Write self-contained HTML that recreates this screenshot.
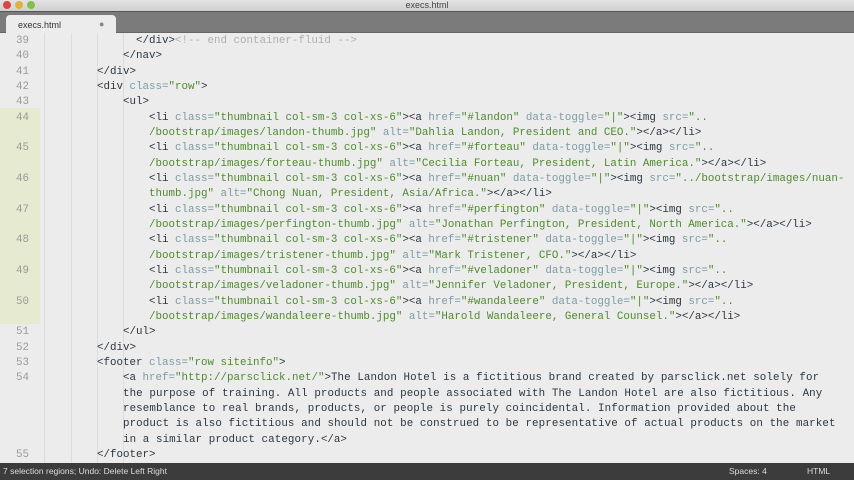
<!DOCTYPE html>
<html><head><meta charset="utf-8"><style>
*{margin:0;padding:0;box-sizing:border-box}
body{width:854px;height:480px;overflow:hidden;background:#ececec;font-family:"Liberation Mono",monospace;position:relative}
#title{position:absolute;left:0;top:0;width:854px;height:11px;background:linear-gradient(#e4e4e4,#cfcfcf);font:9px "Liberation Sans",sans-serif;color:#444;text-align:center;line-height:11px}
.dot{position:absolute;top:1px;width:8px;height:8px;border-radius:50%}
#tabbar{position:absolute;left:0;top:11px;width:854px;height:22px;background:#7b7b7b;border-top:1px solid #555;border-bottom:1px solid #666}
#tab{position:absolute;left:6px;top:3px;width:110px;height:19px;background:#ececec;border-radius:4px 4px 0 0;font:9px "Liberation Sans",sans-serif;color:#333;padding:5px 0 0 12px}
#gut{position:absolute;left:0;top:33px;width:40px;height:430px;background:#ececec}
#hl{position:absolute;left:0;top:108px;width:40px;height:216px;background:#e6ead0}
.g{position:absolute;top:33px;width:1px;height:430px;background:#dcdcdc}
#code{position:absolute;left:45px;top:34px;font-size:10.83px;line-height:15.33px;white-space:pre;color:#2c3640}
.n{position:absolute;left:0;width:29px;text-align:right;font-size:10.83px;line-height:15.33px;color:#9a9a9a;margin-top:2px}
.a{color:#7c9ca4}.s{color:#4f8a2e}.c{color:#b0b0b0}
.f{letter-spacing:0.1px}
#status{position:absolute;left:0;top:463px;width:854px;height:17px;background:#3c3c3c;color:#ddd;font:8.5px "Liberation Sans",sans-serif;line-height:17px}
</style></head><body>
<div id="title"><span class="dot" style="left:3px;background:#e0443e"></span><span class="dot" style="left:15px;background:#e2b03a"></span><span class="dot" style="left:27px;background:#7fc24a"></span>execs.html</div>
<div id="tabbar"><div id="tab">execs.html<span style="position:absolute;left:93px;top:4px;color:#888">●</span></div></div>
<div id="gut"></div><div id="hl"></div>
<div class="g" style="left:44px"></div><div class="g" style="left:71px"></div><div class="g" style="left:97px"></div><div class="g" style="left:123px"></div>
<div class="n" style="top:32px">39</div><div class="n" style="top:47.3px">40</div><div class="n" style="top:62.7px">41</div><div class="n" style="top:78px">42</div><div class="n" style="top:93.3px">43</div><div class="n" style="top:108.7px">44</div><div class="n" style="top:139.3px">45</div><div class="n" style="top:170px">46</div><div class="n" style="top:200.7px">47</div><div class="n" style="top:231.3px">48</div><div class="n" style="top:262px">49</div><div class="n" style="top:292.7px">50</div><div class="n" style="top:323.3px">51</div><div class="n" style="top:338.7px">52</div><div class="n" style="top:354px">53</div><div class="n" style="top:369.3px">54</div><div class="n" style="top:446px">55</div><div class="n" style="top:461px">56</div>
<div id="code">              &lt;/div&gt;<span class="c">&lt;!-- end container-fluid --&gt;</span>
            &lt;/nav&gt;
        &lt;/div&gt;
        &lt;div <span class="a">class=</span><span class="s">"row"</span>&gt;
            &lt;ul&gt;
                &lt;li <span class="a">class=</span><span class="s">"thumbnail col-sm-3 col-xs-6"</span>&gt;&lt;a <span class="a">href=</span><span class="s">"#landon"</span> <span class="a">data-toggle=</span><span class="s">"|"</span>&gt;&lt;img <span class="a">src=</span><span class="s">"..</span>
<span class="s">                /bootstrap/images/landon-thumb.jpg"</span> <span class="a">alt=</span><span class="s">"Dahlia Landon, President and CEO."</span>&gt;&lt;/a&gt;&lt;/li&gt;
                &lt;li <span class="a">class=</span><span class="s">"thumbnail col-sm-3 col-xs-6"</span>&gt;&lt;a <span class="a">href=</span><span class="s">"#forteau"</span> <span class="a">data-toggle=</span><span class="s">"|"</span>&gt;&lt;img <span class="a">src=</span><span class="s">"..</span>
<span class="s">                /bootstrap/images/forteau-thumb.jpg"</span> <span class="a">alt=</span><span class="s">"Cecilia Forteau, President, Latin America."</span>&gt;&lt;/a&gt;&lt;/li&gt;
                &lt;li <span class="a">class=</span><span class="s">"thumbnail col-sm-3 col-xs-6"</span>&gt;&lt;a <span class="a">href=</span><span class="s">"#nuan"</span> <span class="a">data-toggle=</span><span class="s">"|"</span>&gt;&lt;img <span class="a">src=</span><span class="s">"../bootstrap/images/nuan-</span>
<span class="s">                thumb.jpg"</span> <span class="a">alt=</span><span class="s">"Chong Nuan, President, Asia/Africa."</span>&gt;&lt;/a&gt;&lt;/li&gt;
                &lt;li <span class="a">class=</span><span class="s">"thumbnail col-sm-3 col-xs-6"</span>&gt;&lt;a <span class="a">href=</span><span class="s">"#perfington"</span> <span class="a">data-toggle=</span><span class="s">"|"</span>&gt;&lt;img <span class="a">src=</span><span class="s">"..</span>
<span class="s">                /bootstrap/images/perfington-thumb.jpg"</span> <span class="a">alt=</span><span class="s">"Jonathan Perfington, President, North America."</span>&gt;&lt;/a&gt;&lt;/li&gt;
                &lt;li <span class="a">class=</span><span class="s">"thumbnail col-sm-3 col-xs-6"</span>&gt;&lt;a <span class="a">href=</span><span class="s">"#tristener"</span> <span class="a">data-toggle=</span><span class="s">"|"</span>&gt;&lt;img <span class="a">src=</span><span class="s">"..</span>
<span class="s">                /bootstrap/images/tristener-thumb.jpg"</span> <span class="a">alt=</span><span class="s">"Mark Tristener, CFO."</span>&gt;&lt;/a&gt;&lt;/li&gt;
                &lt;li <span class="a">class=</span><span class="s">"thumbnail col-sm-3 col-xs-6"</span>&gt;&lt;a <span class="a">href=</span><span class="s">"#veladoner"</span> <span class="a">data-toggle=</span><span class="s">"|"</span>&gt;&lt;img <span class="a">src=</span><span class="s">"..</span>
<span class="s">                /bootstrap/images/veladoner-thumb.jpg"</span> <span class="a">alt=</span><span class="s">"Jennifer Veladoner, President, Europe."</span>&gt;&lt;/a&gt;&lt;/li&gt;
                &lt;li <span class="a">class=</span><span class="s">"thumbnail col-sm-3 col-xs-6"</span>&gt;&lt;a <span class="a">href=</span><span class="s">"#wandaleere"</span> <span class="a">data-toggle=</span><span class="s">"|"</span>&gt;&lt;img <span class="a">src=</span><span class="s">"..</span>
<span class="s">                /bootstrap/images/wandaleere-thumb.jpg"</span> <span class="a">alt=</span><span class="s">"Harold Wandaleere, General Counsel."</span>&gt;&lt;/a&gt;&lt;/li&gt;
            &lt;/ul&gt;
        &lt;/div&gt;
        &lt;footer <span class="a">class=</span><span class="s">"row siteinfo"</span>&gt;
            &lt;a <span class="a">href=</span><span class="s">"http://parsclick.net/"</span>&gt;<span class="f">The Landon Hotel is a fictitious brand created by parsclick.net solely for</span>
            <span class="f">the purpose of training. All products and people associated with The Landon Hotel are also fictitious. Any</span>
            <span class="f">resemblance to real brands, products, or people is purely coincidental. Information provided about the</span>
            <span class="f">product is also fictitious and should not be construed to be representative of actual products on the market</span>
            <span class="f">in a similar product category.</span>&lt;/a&gt;
        &lt;/footer&gt;
    &lt;/div&gt;<span class="c">&lt;!-- end container --&gt;</span></div>
<div id="status"><span style="position:absolute;left:3px">7 selection regions; Undo: Delete Left Right</span><span style="position:absolute;left:729px">Spaces: 4</span><span style="position:absolute;left:807px">HTML</span></div>
</body></html>
